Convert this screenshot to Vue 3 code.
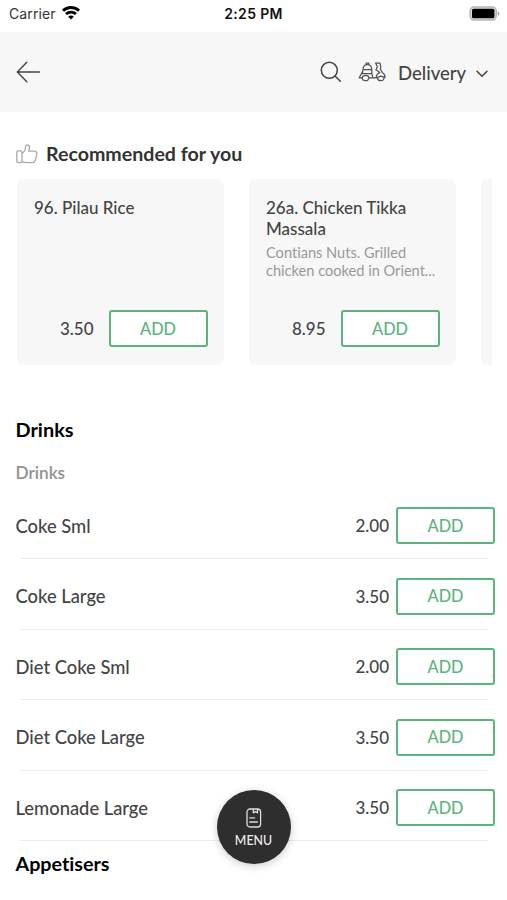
<script setup>
const recommended = [
  { name: '96. Pilau Rice', price: '3.50' },
  { name: '26a. Chicken Tikka Massala', note: ['Contians Nuts. Grilled', 'chicken cooked in Orient...'], price: '8.95' }
]
const drinks = [
  { name: 'Coke Sml', price: '2.00' },
  { name: 'Coke Large', price: '3.50' },
  { name: 'Diet Coke Sml', price: '2.00' },
  { name: 'Diet Coke Large', price: '3.50' },
  { name: 'Lemonade Large', price: '3.50' }
]
</script>

<template>
  <div class="screen">
    <div class="status">
      <div class="carrier">
        <span>Carrier</span>
        <svg width="18" height="14" viewBox="0 0 18 14" fill="none" stroke="#000" stroke-width="2.8">
          <path d="M1 4.7C5.3 .4 12.7 .4 17 4.7" />
          <path d="M4 8C6.8 5.4 11.2 5.4 14 8" />
          <path d="M9 13.5L6.2 10.7C7.7 9.2 10.3 9.2 11.8 10.7Z" fill="#000" stroke="none" />
        </svg>
      </div>
      <span class="time">2:25 PM</span>
      <svg class="battery" width="31" height="15" viewBox="0 0 31 15">
        <rect x="1.2" y=".9" width="26" height="13.2" rx="4" fill="#ddd" stroke="#b5b5b5" stroke-width="1.5" />
        <rect x="3" y="2.8" width="22.4" height="9.4" rx="1.5" fill="#000" />
        <path d="M28.6 5.2C31 6 31 9 28.6 9.8Z" fill="#aaa" />
      </svg>
    </div>

    <header class="bar">
      <svg class="back" width="26" height="22" viewBox="0 0 26 22" fill="none" stroke="#444" stroke-width="1.4" stroke-linecap="round" stroke-linejoin="round">
        <path d="M23.4 11H1.5M10.8 1.2L1.3 11L10.8 20.8" />
      </svg>
      <svg class="search" width="22" height="22" viewBox="0 0 22 22" fill="none" stroke="#444" stroke-width="1.5" stroke-linecap="round">
        <circle cx="9.3" cy="9.3" r="8" />
        <path d="M15 15L20.3 20.3" />
      </svg>
      <svg class="scooter" width="28" height="20" viewBox="0 0 28 20" fill="none" stroke="#555" stroke-width="1.25" stroke-linecap="round" stroke-linejoin="round">
        <path d="M5 7.6C5.1 4.6 6.8 2.6 9.4 2.6C12 2.6 13.6 4.6 13.8 7.6V11.6H4.2L5 7.6H13.8M8.1 2.6V1.1H10.8V2.6" />
        <path d="M4.2 10.2L1.2 15.8H4.4M10.8 15.8H18.2C18.2 13 19.6 11.4 21.8 10.6L18 7.8L19.4 4.8L17.6 1.1H22L22.7 4.8L22.4 7.2L24.4 10.8C26.2 11.6 27 13.1 27 15.4L22.8 14.2L18.2 15.8" />
        <path d="M13.8 11.6L15 15.8" />
        <path d="M4.3 15.5C4.3 19.8 10.9 19.8 10.9 15.5C10.3 12.5 4.9 12.5 4.3 15.5Z" />
        <path d="M19.4 15.6C19.7 19.8 26 19.8 26.1 15.2" />
      </svg>
      <span class="mode">Delivery</span>
      <svg class="chevron" width="12" height="8" viewBox="0 0 12 8" fill="none" stroke="#444" stroke-width="1.5" stroke-linecap="round" stroke-linejoin="round">
        <path d="M1 1.2L6 6.3L11 1.2" />
      </svg>
    </header>

    <main>
      <div class="rec-title">
        <svg width="22" height="20" viewBox="0 0 22 20" fill="none" stroke="#aaa" stroke-width="1.3" stroke-linejoin="round" stroke-linecap="round">
          <rect x=".8" y="6.8" width="5.2" height="11.8" rx="1.4" />
          <path d="M6 9C9 8 9.5 5.2 9.6 2.2C9.7 .4 13.5 .2 13.5 3.8C13.5 5.2 13.1 6 12.7 7.2H18.4C20.8 7.2 21.2 9 20.7 10.6L19.2 16.5C18.8 18 18 18.7 16.5 18.7H10C8.2 18.7 7.2 18 6 17.6" />
        </svg>
        <h2>Recommended for you</h2>
      </div>
      <div class="cards">
        <article v-for="r in recommended" :key="r.name" class="card">
          <h3>{{ r.name }}</h3>
          <p v-if="r.note"><span v-for="l in r.note" :key="l">{{ l }}</span></p>
          <div class="buy">
            <span class="price">{{ r.price }}</span>
            <button class="add">ADD</button>
          </div>
        </article>
        <article class="card"></article>
      </div>

      <h2 class="section">Drinks</h2>
      <h4 class="sub">Drinks</h4>
      <ul class="list">
        <li v-for="d in drinks" :key="d.name">
          <span class="name">{{ d.name }}</span>
          <span class="price">{{ d.price }}</span>
          <button class="add">ADD</button>
        </li>
      </ul>
      <h2 class="section next">Appetisers</h2>
    </main>

    <button class="menu">
      <svg width="16" height="20" viewBox="0 0 16 20" fill="none" stroke="#ddd" stroke-width="1.3" stroke-linecap="round" stroke-linejoin="round">
        <rect x="1" y="1" width="13.6" height="18" rx="3" />
        <path d="M7.3 1.2V4.8L9.4 3.7L11.5 4.8V1.2M3.8 9.9H8.6M3.8 14H11.4" />
      </svg>
      <span>MENU</span>
    </button>
  </div>
</template>

<style>
body { margin: 0; background: #fff; }
</style>

<style scoped>
.screen { position: relative; width: 507px; height: 900px; overflow: hidden; background: #fff; font-family: Lato, sans-serif; font-variant-ligatures: none; color: #444; }
h2, h3, h4, p, ul { margin: 0; padding: 0; }
.status { display: grid; grid-template-columns: 1fr auto 1fr; align-items: center; height: 32px; padding: 0 7px 5px 9px; box-sizing: border-box; font-family: Inter, sans-serif; font-size: 14px; }
.carrier { display: flex; align-items: center; gap: 6px; color: #333; letter-spacing: .1px; }
.carrier svg { margin-top: -1px; }
.time { font-weight: 600; color: #111; letter-spacing: .35px; margin-left: -2px; }
.battery { justify-self: end; margin-top: -1px; }
.bar { display: flex; align-items: center; height: 80px; padding: 0 19px 0 16px; box-sizing: border-box; background: #f7f7f7; }
.search { margin-left: auto; margin-right: 16px; }
.scooter { margin-right: 12px; }
.mode { font-size: 18.5px; line-height: 24px; width: 68px; margin-right: 10px; margin-top: 1px; white-space: nowrap; font-weight: 500; }
.chevron { margin-top: 3px; }
.rec-title { display: flex; align-items: center; gap: 8px; height: 24px; padding: 30px 0 1px 16px; }
.rec-title h2 { font-size: 19.6px; line-height: 24px; font-weight: 700; color: #333; }
.cards { display: flex; gap: 25px; margin: 12px 15px 0 17px; overflow: hidden; }
.card { display: flex; flex-direction: column; flex: none; width: 207px; height: 186px; box-sizing: border-box; padding: 19px 16.5px 18px 17px; border-radius: 7px; background: #f7f7f7; }
.card h3 { font-size: 17px; line-height: 20.5px; font-weight: 500; color: #444; }
.card p { margin-top: 5px; font-size: 14.6px; line-height: 18px; color: #999; }
.card p span { display: block; white-space: nowrap; }
.buy { display: flex; align-items: center; justify-content: flex-end; gap: 15px; margin-top: auto; }
.price { font-size: 17px; line-height: 22px; font-weight: 500; color: #444; }
.add { width: 99px; height: 37px; padding: 0; box-sizing: border-box; border: 2px solid #5bb47c; border-radius: 3px; background: #fff; color: #5bb47c; font: 500 16.3px/22px Lato, sans-serif; }
.section { margin: 52px 0 0 15.5px; font-size: 19.9px; line-height: 24px; font-weight: 700; color: #000; }
.sub { margin: 21px 0 0 15.5px; font-size: 17.2px; line-height: 22px; font-weight: 600; color: #929292; }
.list { list-style: none; margin-top: 4.5px; }
.list li { position: relative; display: flex; align-items: center; height: 70.5px; box-sizing: border-box; padding: 3.5px 12px 0 15.5px; }
.list li::after { content: ''; position: absolute; left: 20px; right: 19px; bottom: 0; height: 1px; background: #ececec; }
.name { flex: 1; font-size: 18.35px; line-height: 24px; font-weight: 500; }
.list .price { margin-right: 7px; margin-top: 1px; }
.next { margin-top: 11px; font-size: 19.7px; }
.menu { position: absolute; left: 217px; top: 790px; width: 74px; height: 74px; padding: 4px 1px 0 0; display: flex; flex-direction: column; align-items: center; justify-content: center; gap: 5px; border: 0; border-radius: 50%; background: #2e2e2e; color: #eee; font: 500 12.4px/16px Lato, sans-serif; box-shadow: 0 2px 8px rgba(0, 0, 0, .2); }
.menu svg { margin-top: -2px; }
</style>
